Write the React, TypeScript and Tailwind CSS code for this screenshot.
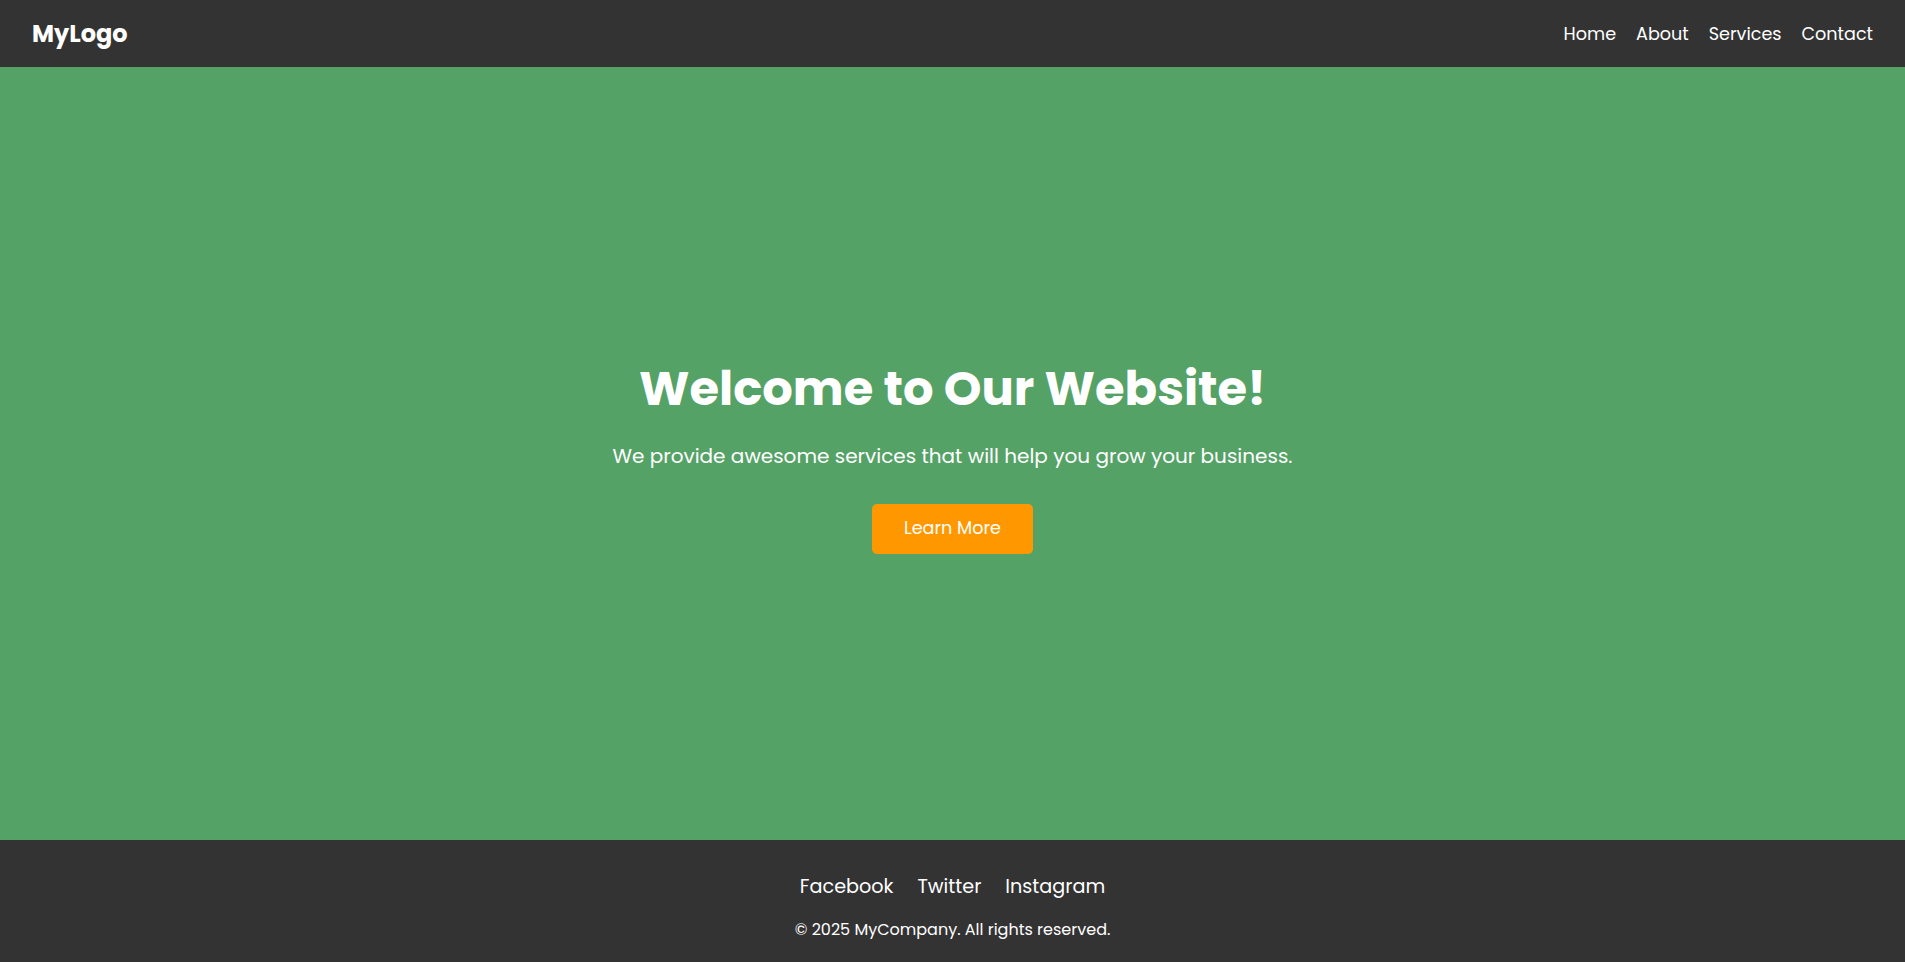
const navLinks = ["Home", "About", "Services", "Contact"];
const socialLinks = ["Facebook", "Twitter", "Instagram"];

const App = () => {
  return (
    <div className="min-h-screen flex flex-col font-['Poppins','Inter',sans-serif] text-white">
      {/* Header */}
      <header className="h-[67px] bg-[#333333] px-8 flex items-center justify-between">
        <h1 className="text-[24px] font-bold">MyLogo</h1>
        <nav className="flex items-center gap-5 pt-[2px]">
          {navLinks.map((link) => (
            <a key={link} href="#" className="text-[17.6px] text-white">
              {link}
            </a>
          ))}
        </nav>
      </header>

      {/* Hero */}
      <section className="flex-1 bg-[#55a267] flex flex-col items-center justify-center text-center pt-[6px]">
        <h2 className="text-[48px] leading-[58px] font-bold mb-[23px]">
          Welcome to Our Website!
        </h2>
        <p className="text-[20px] leading-[30px] mb-[33px]">
          We provide awesome services that will help you grow your business.
        </p>
        <button className="h-[50px] px-8 bg-[#ff9800] rounded-[5px] text-[17.6px] text-white">
          Learn More
        </button>
      </section>

      {/* Footer */}
      <footer className="bg-[#333333] pt-[32px] pb-[20px] flex flex-col items-center">
        <div className="flex items-center gap-6 text-[19.2px] leading-[30px]">
          {socialLinks.map((link) => (
            <a key={link} href="#" className="text-white">
              {link}
            </a>
          ))}
        </div>
        <p className="mt-[16px] text-[16px] leading-[24px]">
          © 2025 MyCompany. All rights reserved.
        </p>
      </footer>
    </div>
  );
};

export default App;
